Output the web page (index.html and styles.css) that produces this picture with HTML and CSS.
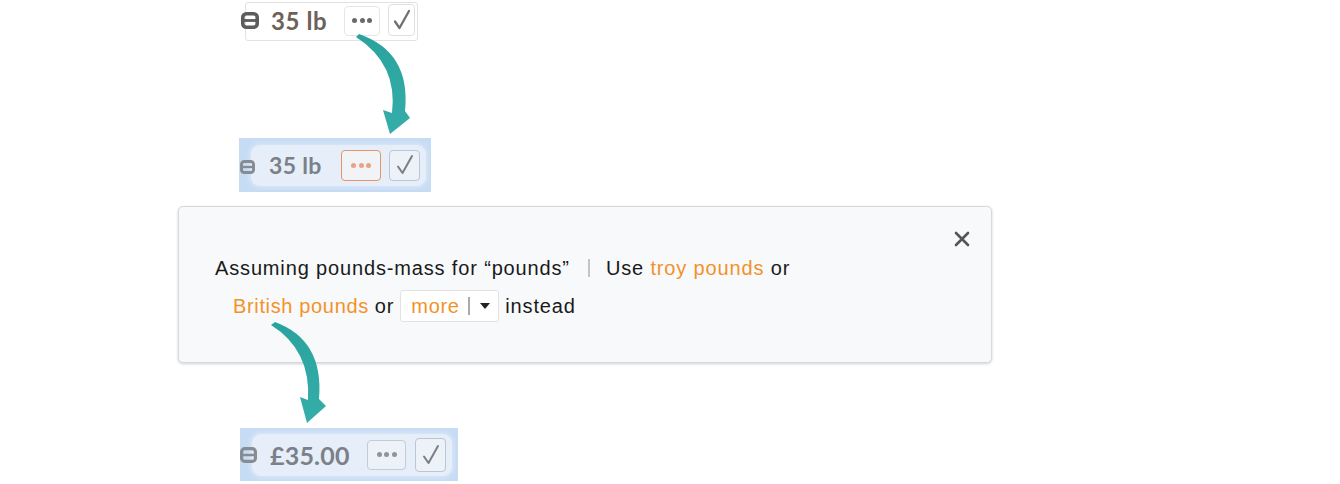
FILE: index.html
```html
<!DOCTYPE html>
<html>
<head>
<meta charset="utf-8">
<link rel="stylesheet" href="styles.css">
</head>
<body>
<main class="page">
  <div class="widget w1">
    <svg class="toggle" width="18" height="17" viewBox="0 0 18 17"><rect x="1.8" y="1.8" width="14.4" height="13.4" rx="3.5" fill="none" stroke="#5c5c5c" stroke-width="3.6"/><line x1="3" y1="8.5" x2="15" y2="8.5" stroke="#5c5c5c" stroke-width="2.8"/></svg>
    <span class="value v1">35 lb</span>
    <span class="btn dots d1"><i></i><i></i><i></i></span>
    <span class="btn check c1"><svg width="22" height="24" viewBox="0 0 22 24"><path d="M4 13.5 L8.5 20 L18 3" fill="none" stroke="#707070" stroke-width="2.3" stroke-linecap="round" stroke-linejoin="round"/></svg></span>
  </div>

  <div class="band b2">
    <svg class="toggle t2" width="15" height="14" viewBox="0 0 15 14"><rect x="1.5" y="1.5" width="12" height="11" rx="2.8" fill="none" stroke="#878b92" stroke-width="3"/><line x1="2.5" y1="7" x2="12.5" y2="7" stroke="#878b92" stroke-width="2.3"/></svg>
    <span class="value v2">35 lb</span>
    <span class="btn dots d2"><i></i><i></i><i></i></span>
    <span class="btn check c2"><svg width="22" height="24" viewBox="0 0 22 24"><path d="M4 13.5 L8.5 20 L18 3" fill="none" stroke="#7a7e86" stroke-width="2" stroke-linecap="round" stroke-linejoin="round"/></svg></span>
  </div>

  <section class="popup">
    <span class="close"><svg width="16" height="16" viewBox="0 0 16 16"><path d="M2 2 L14 14 M14 2 L2 14" stroke="#555" stroke-width="2.6" stroke-linecap="round"/></svg></span>
    <div class="line l1">
      <span>Assuming pounds-mass for “pounds”</span>
      <span class="sep"></span>
      <span>Use <span class="link">troy pounds</span> or</span>
    </div>
    <div class="line l2">
      <span class="link">British pounds</span>
      <span>or</span>
      <span class="select"><span class="link">more</span><span class="divider"></span><span class="caret"></span></span>
      <span>instead</span>
    </div>
  </section>

  <div class="band b3">
    <svg class="toggle t3" width="17" height="16" viewBox="0 0 17 16"><rect x="1.6" y="1.6" width="13.8" height="12.8" rx="3.2" fill="none" stroke="#878b92" stroke-width="3.2"/><line x1="2.5" y1="8" x2="14.5" y2="8" stroke="#878b92" stroke-width="2.5"/></svg>
    <span class="value v3">£35.00</span>
    <span class="btn dots d3"><i></i><i></i><i></i></span>
    <span class="btn check c3"><svg width="22" height="26" viewBox="0 0 22 26"><path d="M4 14.5 L8.5 21 L18 4" fill="none" stroke="#7a7e86" stroke-width="2" stroke-linecap="round" stroke-linejoin="round"/></svg></span>
  </div>

  <svg class="arrows" width="1340" height="484" viewBox="0 0 1340 484">
    <defs>
      <linearGradient id="tg" x1="0" y1="0" x2="0" y2="1">
        <stop offset="0" stop-color="#2aa39e"/>
        <stop offset="1" stop-color="#35ada8"/>
      </linearGradient>
    </defs>
    <path d="M359 34 Q411 52 405 111 L410 118 L390 134 L383 110 L392 113 Q398 64 356 37 Z" fill="url(#tg)"/>
    <path d="M275 322 Q324 340 319 399 L326 406 L307 423 L300 397 L308 400 Q311 350 271 325 Z" fill="url(#tg)"/>
  </svg>
</main>
</body>
</html>
```
FILE: styles.css
```css
* { box-sizing: border-box; }
html, body { margin: 0; padding: 0; background: #ffffff; }
.page {
  position: relative;
  width: 1340px;
  height: 484px;
  overflow: hidden;
  display: flex;
  flex-direction: column;
  align-items: flex-start;
  font-family: "Liberation Sans", Arial, sans-serif;
}

.widget, .band {
  display: flex;
  align-items: center;
  flex: none;
}

.w1 {
  margin-top: 2px;
  margin-left: 245px;
  width: 173px;
  height: 39px;
  border: 1px solid #e2e2e2;
  border-radius: 3px;
  background: #fff;
}
.w1 .toggle { margin-left: -5px; margin-top: -3px; }

.value {
  font-family: Lato, "Open Sans", sans-serif;
  font-weight: 700;
  white-space: nowrap;
  flex: none;
}
.v1 { margin-left: 12px; width: 55px; font-size: 24px; letter-spacing: 0.6px; color: #6c625a; margin-top: -3px; }

.btn {
  display: flex;
  align-items: center;
  justify-content: center;
  flex: none;
  border-radius: 4px;
}
.dots { gap: 2.5px; }
.dots i { display: block; width: 5px; height: 5px; border-radius: 50%; background: #6a6a6a; }

.d1 { margin-left: 18px; width: 36px; height: 30px; border: 1px solid #e6e6e6; margin-top: -2px; }
.c1 { margin-left: 8px; width: 27px; height: 32px; border: 1px solid #e0e0e0; margin-top: -4px; }

.band {
  position: relative;
  background: #c6dbf4;
}
.band::before {
  content: "";
  position: absolute;
  border-radius: 9px;
  background: #e5eef9;
  box-shadow: 0 0 4px 2px #d9e6f7;
}
.band > * { position: relative; }

.b2 {
  margin-top: 97px;
  margin-left: 239px;
  width: 192px;
  height: 54px;
}
.b2::before { left: 12px; top: 7px; right: 5px; bottom: 6px; }
.t2 { margin-left: 1px; margin-top: 3px; }
.v2 { margin-left: 14px; width: 56px; font-size: 23px; color: #7b8089; letter-spacing: 0.3px; }
.d2 { margin-left: 16px; width: 40px; height: 31px; border: 1.5px solid #e6956b; background: #f2f3f7; }
.d2 i { background: #e9a283; }
.c2 { margin-left: 8px; width: 31px; height: 31px; border: 1px solid #bcc5d2; background: #edf2f9; }

.popup {
  position: relative;
  margin-top: 14px;
  margin-left: 178px;
  width: 814px;
  height: 157px;
  flex: none;
  background: #f8f9fb;
  border: 1px solid #d9d9d9;
  border-radius: 5px;
  box-shadow: 0 1px 3px rgba(0,0,0,0.18);
  padding: 42px 36px 0 36px;
  font-size: 20px;
  letter-spacing: 0.85px;
  color: #1a1a1a;
}
.close { position: absolute; right: 21px; top: 22px; display: block; width: 16px; height: 16px; }
.line {
  display: flex;
  align-items: center;
  height: 38px;
  white-space: nowrap;
}
.l1 .sep { display: block; width: 2px; height: 18px; background: #c4c4c4; margin: 0 16px 0 18px; }
.l2 { margin-left: 18px; gap: 6px; }
.l2 .link:first-child { letter-spacing: 0.65px; }
.link { color: #f3912a; }
.select {
  display: flex;
  align-items: center;
  width: 99px;
  height: 32px;
  border: 1px solid #e2e2e2;
  border-radius: 3px;
  background: #fff;
  padding-left: 10px;
  margin-left: 0;
}
.select .divider { display: block; width: 2px; height: 18px; background: #aaa; margin-left: 8px; }
.select .caret { display: block; width: 0; height: 0; border-left: 5px solid transparent; border-right: 5px solid transparent; border-top: 6px solid #222; margin-left: 10px; }

.b3 {
  margin-top: 65px;
  margin-left: 240px;
  width: 218px;
  height: 53px;
}
.b3::before { left: 12px; top: 6px; right: 6px; bottom: 5px; }
.t3 { margin-left: 0; margin-top: 0; }
.v3 { margin-left: 13px; width: 82px; font-size: 25px; color: #7b8089; letter-spacing: 0.2px; }
.d3 { margin-left: 15px; width: 39px; height: 30px; border: 1px solid #c3cbd7; background: #edf2f9; }
.d3 i { background: #8f939a; }
.c3 { margin-left: 9px; width: 31px; height: 34px; border: 1px solid #bcc5d2; background: #edf2f9; }

.arrows { position: absolute; left: 0; top: 0; pointer-events: none; }
```
